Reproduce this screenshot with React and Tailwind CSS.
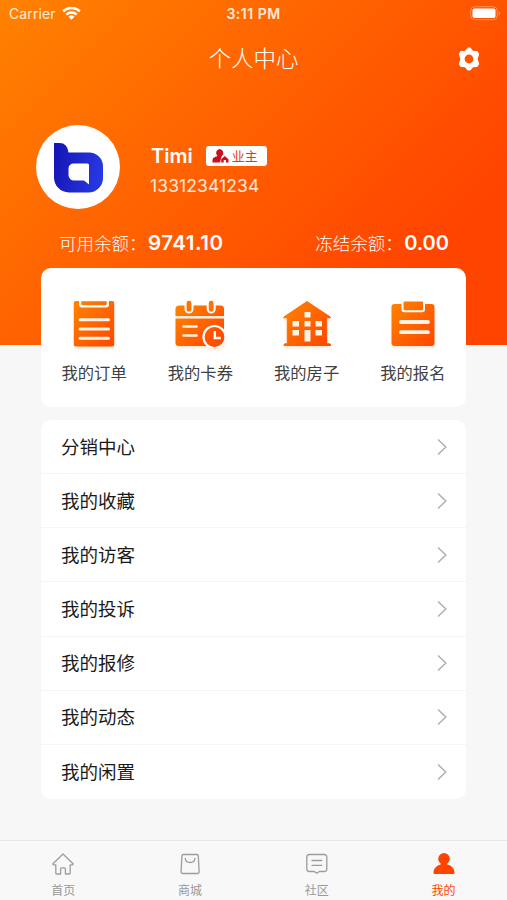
const shortcuts = [
    { label: '我的订单', Icon: OrderIcon },
    { label: '我的卡券', Icon: CouponIcon },
    { label: '我的房子', Icon: HouseIcon },
    { label: '我的报名', Icon: SignupIcon },
];

const menuItems = ['分销中心', '我的收藏', '我的访客', '我的投诉', '我的报修', '我的动态', '我的闲置'];

const tabs = [
    { label: '首页', Icon: HomeTabIcon },
    { label: '商城', Icon: ShopTabIcon },
    { label: '社区', Icon: CommunityTabIcon },
    { label: '我的', Icon: ProfileTabIcon, active: true },
];

// Shared orange gradient for the shortcut icons
function OrangeGradient({ id }) {
    return (
        <defs>
            <linearGradient id={id} x1="0" y1="0" x2="48" y2="46" gradientUnits="userSpaceOnUse">
                <stop offset="0.05" stopColor="#ff8500" />
                <stop offset="0.9" stopColor="#ff4b00" />
            </linearGradient>
        </defs>
    );
}

function OrderIcon() {
    return (
        <svg width="50" height="48" viewBox="0 0 50 48" fill="none">
            <OrangeGradient id="order" />
            <rect x="4.8" y="1" width="40.4" height="45.4" rx="2" fill="url(#order)" />
            <path d="M10 0h30v4.500a3 3 0 0 1-3 3H13a3 3 0 0 1-3-3z" fill="#fff" />
            <path d="M12.300 1.200h25.400v2.600a1.500 1.500 0 0 1-1.500 1.500H13.800a1.500 1.500 0 0 1-1.500-1.500z" fill="url(#order)" />
            <path d="M11 19.700h28.500M11 29h28.500M11 38.300h28.500" stroke="#fff3e8" strokeWidth="3" strokeLinecap="round" />
        </svg>
    );
}

function CouponIcon() {
    return (
        <svg width="50" height="48" viewBox="0 0 50 48" fill="none">
            <OrangeGradient id="coupon" />
            <path d="M4 5.500h41.500a3.500 3.500 0 0 1 3.500 3.500v7H.5V9A3.500 3.500 0 0 1 4 5.500zM.5 18.500H49v24a3.500 3.500 0 0 1-3.500 3.500H4A3.500 3.500 0 0 1 .5 42.500z" fill="url(#coupon)" />
            <path d="M14 3.500v5.500M36.200 3.500v5.500" stroke="#fff" strokeWidth="9" strokeLinecap="round" />
            <path d="M14 3.200v6.200M36.200 3.200v6.200" stroke="#ff7200" strokeWidth="4.800" strokeLinecap="round" />
            <path d="M8.500 26.500h13M8.500 35.500h13" stroke="#fff3e8" strokeWidth="2.700" strokeLinecap="round" />
            <circle cx="39.500" cy="37" r="11" fill="url(#coupon)" stroke="#fff" strokeWidth="2.200" />
            <path d="M39.800 31v7h6" stroke="#fff" strokeWidth="2.300" />
        </svg>
    );
}

function HouseIcon() {
    return (
        <svg width="50" height="48" viewBox="0 0 50 48" fill="none">
            <OrangeGradient id="house" />
            <path d="M25 1.500 48.300 17v.8h-3.600v26h2.800a1 1 0 0 1 1 1v.700H2V44.800a1 1 0 0 1 1-1h2.300v-26H1.800V17z" fill="url(#house)" stroke="url(#house)" strokeLinejoin="round" />
            <path d="M22.500 12h6v5.500h-6zM10.500 21h6.500v5.500h-6.500zM22.500 21h6v5.500h-6zM33.500 21h6.500v5.500h-6.500zM10.500 30h6.500v5.500h-6.500zM33.500 30h6.500v5.500h-6.500zM22.500 30h6v11.500h-6z" fill="#fff3e8" />
        </svg>
    );
}

function SignupIcon() {
    return (
        <svg width="50" height="48" viewBox="0 0 50 48" fill="none">
            <OrangeGradient id="signup" />
            <rect x="3.500" y="4" width="43" height="42" rx="3" fill="url(#signup)" />
            <rect x="14.500" y="0.500" width="21.500" height="10.800" rx="2" fill="url(#signup)" stroke="#fff" strokeWidth="2" />
            <path d="M13 22h27M13 32.200h27" stroke="#fff3e8" strokeWidth="3.800" strokeLinecap="round" />
        </svg>
    );
}

function HomeTabIcon() {
    return (
        <svg width="24" height="24" viewBox="0 0 24 24" fill="none" stroke="#9c9c9c" strokeWidth="1.300" strokeLinejoin="round">
            <path d="M12 2 22.300 12l-.8.900h-2.300v8.300q0 .8-.8.800h-4v-5.300q0-.9-.9-.9h-3q-.9 0-.9.900V22H5.600q-.8 0-.8-.8v-8.300H2.500l-.8-.9z" />
        </svg>
    );
}

function ShopTabIcon() {
    return (
        <svg width="24" height="24" viewBox="0 0 24 24" fill="none" stroke="#9c9c9c" strokeWidth="1.300" strokeLinecap="round">
            <path d="M5.500 2.500h13.200a1.600 1.600 0 0 1 1.600 1.500l.8 15.600a1.800 1.800 0 0 1-1.800 1.900H4.900a1.800 1.800 0 0 1-1.800-1.900L3.900 4a1.600 1.600 0 0 1 1.600-1.500z" />
            <path d="M7.300 6.500c.4 5.300 9.200 5.300 9.600 0" />
        </svg>
    );
}

function CommunityTabIcon() {
    return (
        <svg width="24" height="24" viewBox="0 0 24 24" fill="none" stroke="#9c9c9c" strokeWidth="1.300" strokeLinecap="round" strokeLinejoin="round">
            <path d="M4.300 2.500h15a2.500 2.500 0 0 1 2.500 2.500v12a2.500 2.500 0 0 1-2.500 2.500h-5l-2.500 1.800-2.500-1.800h-5A2.500 2.500 0 0 1 1.800 17V5a2.500 2.500 0 0 1 2.500-2.500z" />
            <path d="M7 8.500h9.700M7 13.300h9.700" />
        </svg>
    );
}

function ProfileTabIcon() {
    return (
        <svg width="24" height="24" viewBox="0 0 24 24" fill="#ff4400">
            <path d="M12 1a5.800 5.800 0 0 1 5.800 5.800c0 2-1 3.600-2.500 4.600v1c4.200 1 7.200 4 7.200 8 0 1.300-.5 1.600-1.600 1.600H3.100c-1.100 0-1.600-.3-1.600-1.600 0-4 3-7 7.200-8v-1c-1.500-1-2.500-2.600-2.500-4.600A5.800 5.800 0 0 1 12 1z" />
        </svg>
    );
}

function StatusBar() {
    return (
        <div className="grid h-7 grid-cols-3 items-center pl-[9px] pr-[6px] text-white/85">
            <div className="flex items-center gap-[6px] text-[14px] leading-7">
                <span className="tracking-[0.100px]">Carrier</span>
                <svg className="-mt-[2px]" width="19" height="14" viewBox="0 0 19 14" fill="none" stroke="#fff" strokeWidth="2.500">
                    <path d="M1.200 5.300a11.800 11.800 0 0 1 16.600 0M4.300 8.600a7.400 7.400 0 0 1 10.400 0" />
                    <path d="m9.500 13.800-3-3.100a4.300 4.300 0 0 1 6 0z" fill="#fff" stroke="none" />
                </svg>
            </div>
            <span className="-ml-[3px] text-center text-[14px] font-semibold leading-7 tracking-[0.500px]">3:11 PM</span>
            <svg className="-mt-[2px] justify-self-end" width="31" height="15" viewBox="0 0 31 15" fill="none">
                <rect x="0.700" y="0.700" width="26.500" height="13" rx="4" stroke="#fff" strokeOpacity="0.350" />
                <rect x="2.500" y="2.500" width="23" height="9.500" rx="2" fill="#fff" />
                <path d="M28.800 5v4.500q2-2.200 0-4.500z" fill="#fff" fillOpacity="0.500" />
            </svg>
        </div>
    );
}

function Avatar() {
    return (
        <div className="flex h-[84px] w-[84px] items-center justify-center rounded-full bg-white">
            <svg width="50" height="52" viewBox="0 0 50 52">
                <defs>
                    <linearGradient id="logo" x1="0" y1="20" x2="50" y2="30" gradientUnits="userSpaceOnUse">
                        <stop offset="0" stopColor="#1515b5" />
                        <stop offset="1" stopColor="#2839e2" />
                    </linearGradient>
                </defs>
                <path fillRule="evenodd" fill="url(#logo)" d="M1 2H6.500q8 0 9 9.500H36A14 14 0 0 1 50 25.500V37a14.500 14.500 0 0 1-14.500 14.500H16A15 15 0 0 1 1 36.500zM20.500 22.500a5 5 0 0 0-5 5V34a5.500 5.500 0 0 0 5.500 5.500h10l5 4V24q0-1.500-1.500-1.500z" />
            </svg>
        </div>
    );
}

export default function App() {
    return (
        <div className="flex h-[900px] w-full flex-col overflow-hidden bg-[#f7f7f7] font-['Inter','Noto_Sans_CJK_SC',sans-serif]">
            <header className="h-[345px] shrink-0 bg-[linear-gradient(135deg,#ff8200_0%,#ff4400_80%)]">
                <StatusBar />
                <div className="grid h-[62px] grid-cols-3 items-center pr-[26px]">
                    <h1 className="col-start-2 -mr-[26px] text-center text-[22.500px] font-light leading-none text-white">个人中心</h1>
                    <svg className="justify-self-end" width="24" height="24" viewBox="0 0 24 24">
                        <path
                            fillRule="evenodd"
                            fill="#fff"
                            stroke="#fff"
                            strokeWidth="1.200"
                            strokeLinejoin="round"
                            d="M11 1.200h2l2.800 3.200 4.400.3 1.300 2.300L20 12l1.500 5-1.300 2.300-4.400.3-2.800 3.200h-2l-2.800-3.200-4.400-.3L2.500 17 4 12 2.500 7l1.300-2.300 4.400-.3zM12 7a5 5 0 1 0 0 10 5 5 0 0 0 0-10z"
                        />
                    </svg>
                </div>

                <div className="mt-[35px] flex pl-9">
                    <Avatar />
                    <div className="ml-[30px] pt-[18px]">
                        <div className="flex items-center">
                            <span className="pl-[1px] text-[20px] font-semibold leading-[26px] text-white">Timi</span>
                            <span className="ml-[13px] flex h-[20px] w-[61px] items-center rounded-[3px] bg-white pl-[6px] text-[13px] leading-none text-[#df3a20]">
                                <svg className="mr-[3px]" width="17" height="14" viewBox="0 0 17 14" fill="#c9101c">
                                    <path d="M7.500 0a4 4 0 0 1 2.500 7l-.5.800-1.500 5.700H.5V11q0-2.300 2.500-3L5.500 7a4 4 0 0 1 2-7z" />
                                    <path d="m12.800 7 3.700 3.200v3.300H14V11h-2.300v2.500H9.200v-3.300z" />
                                </svg>
                                业主
                            </span>
                        </div>
                        <p className="mt-[5px] text-[17.500px] leading-6 tracking-[0.100px] text-white/85">13312341234</p>
                    </div>
                </div>

                <div className="mt-5 flex h-[28px] items-center justify-between pl-[59px] pr-[58px] text-[17.500px] text-white">
                    <div className="flex items-center">
                        <span className="w-[89px] whitespace-nowrap pt-[2px] font-light">可用余额：</span>
                        <b className="text-[20.500px] font-semibold tracking-[0.500px]">9741.10</b>
                    </div>
                    <div className="flex items-center">
                        <span className="w-[89px] whitespace-nowrap pt-[2px] font-light">冻结余额：</span>
                        <b className="text-[20px] font-semibold">0.00</b>
                    </div>
                </div>
            </header>

            <section className="mx-auto -mt-[77px] grid h-[139px] w-[425px] shrink-0 grid-cols-4 rounded-[10px] bg-white pt-[32px]">
                {shortcuts.map(({ label, Icon }) => (
                    <div key={label} className="flex flex-col items-center">
                        <div className="drop-shadow-[0_2px_1px_rgba(255,100,0,0.15)]">
                            <Icon />
                        </div>
                        <span className="mt-[13px] text-[16.300px] leading-6 text-[#404040]">{label}</span>
                    </div>
                ))}
            </section>

            <section className="mx-auto mt-[13px] w-[425px] shrink-0 divide-y divide-[#f5f5f5] rounded-[10px] bg-white">
                {menuItems.map((item) => (
                    <div key={item} className="flex h-[54.140px] items-center justify-between pl-5 pr-[19px]">
                        <span className="pt-[1px] text-[18.500px] leading-none text-[#1a1a1a]">{item}</span>
                        <svg width="10" height="18" viewBox="0 0 10 18" fill="none" stroke="#b0b0b0" strokeWidth="1.500">
                            <path d="m1 1.500 7.800 7.500L1 16.500" />
                        </svg>
                    </div>
                ))}
            </section>

            <nav className="mt-auto grid h-[60px] shrink-0 grid-cols-4 border-t border-[#e6e6e6] bg-[#f8f8f8] pt-[11px]">
                {tabs.map(({ label, Icon, active }) => (
                    <div key={label} className="flex flex-col items-center">
                        <Icon />
                        <span className={active ? 'mt-[7px] text-[12px] leading-4 text-[#ff4400]' : 'mt-[7px] text-[12px] leading-4 text-[#999]'}>
                            {label}
                        </span>
                    </div>
                ))}
            </nav>
        </div>
    );
}
